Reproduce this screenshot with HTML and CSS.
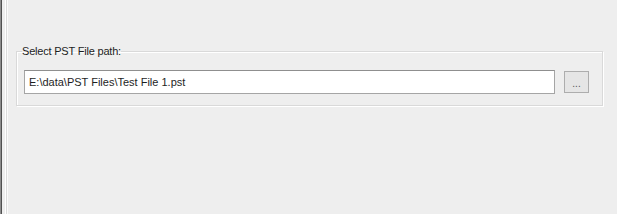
FILE: index.html
```html
<!DOCTYPE html>
<html lang="en">
<head>
    <meta charset="UTF-8">
    <title>Select PST File</title>
    <link rel="stylesheet" href="styles.css">
</head>
<body>
    <div class="page">
        <fieldset class="group">
            <legend class="group-title">Select PST File path:</legend>
            <div class="path-row">
                <input class="path-input" type="text" value="E:\data\PST Files\Test File 1.pst">
                <button class="browse-btn" type="button">...</button>
            </div>
        </fieldset>
    </div>
</body>
</html>
```

FILE: styles.css
```css
* {
    margin: 0;
    padding: 0;
    box-sizing: border-box;
}

html, body {
    height: 100%;
}

body {
    background:
        linear-gradient(to right,
            #8c8c8c 0 1px,
            #505050 1px 2px,
            #eeeeee 2px 5px,
            #ffffff 5px 6px,
            #dcdcdc 6px 7px,
            #fbfbfb 7px 8px,
            #eeeeee 8px);
    font-family: "Liberation Sans", Arial, sans-serif;
    font-size: 11px;
    color: #1e1e1e;
    overflow: hidden;
}

.page {
    padding: 45px 14px 0 16px;
}

/* etched group box */
.group {
    border: 1px solid #d9d9d9;
    box-shadow: inset 1px 1px 0 #ffffff, 1px 1px 0 #ffffff;
    padding: 12px 13px 11px 7px;
    min-width: 0;
}

.group-title {
    margin-left: -2px;
    padding: 0;
    line-height: 13px;
    font-size: 11px;
    letter-spacing: -0.2px;
    color: #1e1e1e;
}

.path-row {
    display: flex;
    align-items: center;
    gap: 9px;
}

.path-input {
    flex: 1;
    height: 24px;
    border: 1px solid #a5a5a5;
    border-top-color: #8f8f8f;
    background: #ffffff;
    padding: 0 4px;
    font-family: "Liberation Sans", Arial, sans-serif;
    font-size: 11px;
    color: #1e1e1e;
    outline: none;
}

.browse-btn {
    width: 25px;
    height: 22px;
    border: 1px solid #adadad;
    background: #e5e5e5;
    font-family: "Liberation Sans", Arial, sans-serif;
    font-size: 10px;
    color: #555555;
    line-height: 18px;
    padding-top: 3px;
}
```
